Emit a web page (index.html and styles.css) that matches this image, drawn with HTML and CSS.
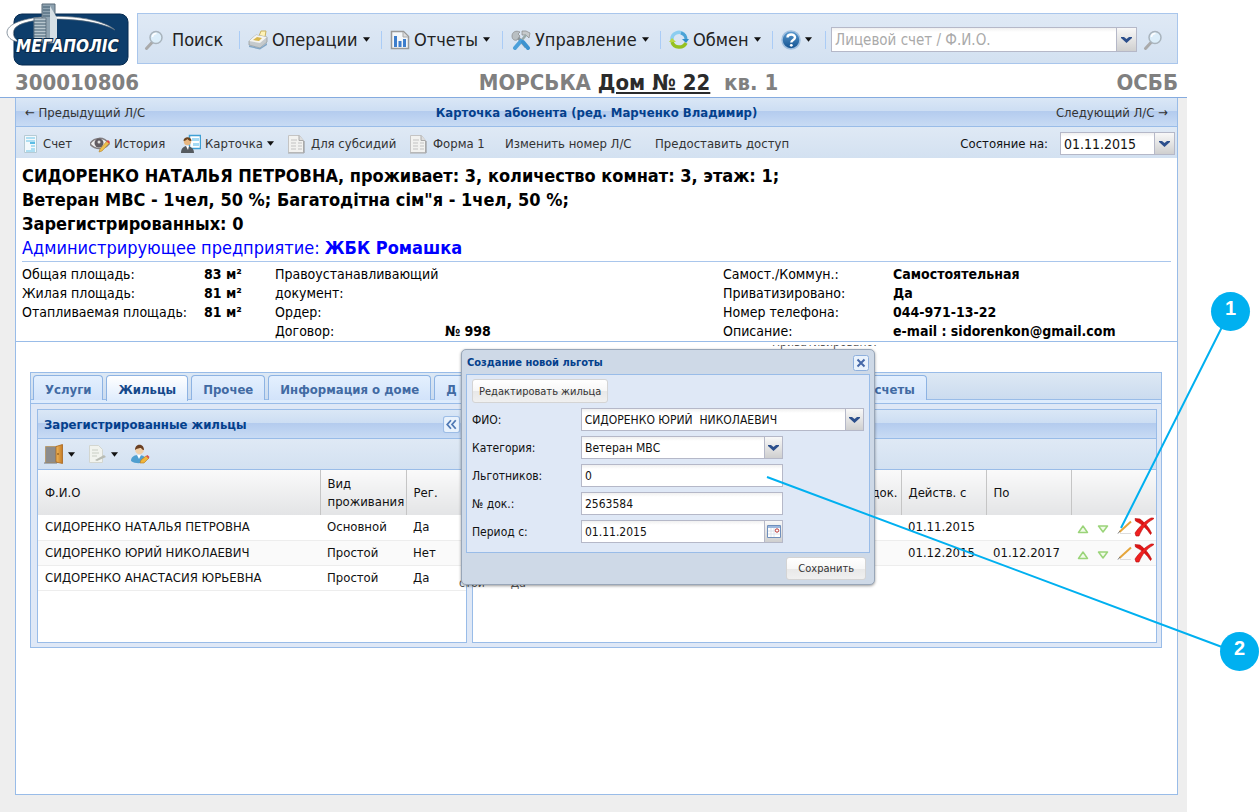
FILE: index.html
```html
<!DOCTYPE html>
<html lang="ru">
<head>
    <meta charset="UTF-8">
    <meta name="viewport" content="width=device-width, initial-scale=1.0">
    <title>Карточка абонента</title>
    <link rel="stylesheet" href="styles.css">
</head>
<body>
    <!-- icon set -->
    <svg class="defs" width="0" height="0">
        <defs>
            <linearGradient id="gDoor" x1="0" x2="1"><stop offset="0" stop-color="#f0b85c"/><stop offset="1" stop-color="#c47a24"/></linearGradient>
            <linearGradient id="gHelp" x1="0" y1="0" x2="0" y2="1"><stop offset="0" stop-color="#5b9bd0"/><stop offset="1" stop-color="#11508f"/></linearGradient>
        </defs>
        <symbol id="i-search" viewBox="0 0 20 20">
            <path d="M8 12.5 2.5 18.5" stroke="#aaa" stroke-width="3" stroke-linecap="round"/>
            <circle cx="12" cy="7.5" r="6" fill="#dceefa" stroke="#a9b4bd" stroke-width="1.5"/>
            <path d="M8.5 7a4 4 0 0 1 4-3.500" stroke="#fff" stroke-width="1.500" fill="none"/>
        </symbol>
        <symbol id="i-printer" viewBox="0 0 20 20">
            <path d="M11 6 13 1h5l-1 6z" fill="#fff3b8" stroke="#c9b160"/>
            <path d="M1 11 8 5l11 2v5l-7 6-11-3z" fill="#c5cacd" stroke="#9a9f9f" stroke-width=".8"/>
            <path d="M1 11 8 5l11 2-7 6z" fill="#f4f4f1"/>
            <path d="M5 10 9 7l5 1-3 3z" fill="#d8b64c"/>
            <path d="M1 15.500 12 18l7-5v2l-7 4.500-11-2.500z" fill="#84a7c6"/>
        </symbol>
        <symbol id="i-chart" viewBox="0 0 20 20">
            <path d="M1.500 1.500h12l5 5v12h-17z" fill="#f4f7fa" stroke="#999" stroke-width="1.500"/>
            <path d="M13 2v5h5" fill="#ddd" stroke="#aaa"/>
            <path d="M4 6h3v11H4zM8.500 11h3v6h-3zM13 9h3v8h-3z" fill="#3d7dcc"/>
        </symbol>
        <symbol id="i-tools" viewBox="0 0 20 20">
            <path d="M4 4 15 17" stroke="#8b969c" stroke-width="3"/>
            <path d="M1 6c0-4 4-6 8-4L7 4l2 2-3 4C3 11 1 9 1 6z" fill="#b9bfc2" stroke="#888" stroke-width=".7"/>
            <path d="M11 1h4l4 2-1 5-3-3h-4z" fill="#c6cacc" stroke="#888" stroke-width=".7"/>
            <path d="M15 5 10 11" stroke="#9aa" stroke-width="2.500"/>
            <path d="M10 11 4 18" stroke="#4ba0da" stroke-width="4" stroke-linecap="round"/>
            <path d="M12 12 17 18" stroke="#3c92d0" stroke-width="4" stroke-linecap="round"/>
        </symbol>
        <symbol id="i-sync" viewBox="0 0 20 20">
            <path d="M3 10A7 7 0 0 1 15 4.500" fill="none" stroke="#8ccdf0" stroke-width="3.500"/>
            <path d="M12 3a7 7 0 0 1 5 7" fill="none" stroke="#4ba3d6" stroke-width="3"/>
            <path d="M13 9h7l-3 4z" fill="#2f8fca"/>
            <path d="M17 13a7.500 7 0 0 1-14-1" fill="none" stroke="#95c11f" stroke-width="3.500"/>
            <path d="M0 12 3 8l4 4z" fill="#b9d83f"/>
        </symbol>
        <symbol id="i-help" viewBox="0 0 20 20">
            <circle cx="10" cy="10" r="9" fill="url(#gHelp)" stroke="#9fbede" stroke-width="1.500"/>
            <path d="M6.500 7.500c0-4 7.500-4 7.500 0 0 2.500-3.700 2.500-3.700 5" fill="none" stroke="#fff" stroke-width="2.400"/>
            <circle cx="10.300" cy="15.300" r="1.400" fill="#fff"/>
        </symbol>
        <symbol id="i-bill" viewBox="0 0 16 20">
            <path d="M1.500 1.500h12v17h-12z" fill="#f3f9fc" stroke="#b6cbd5"/>
            <path d="M3 4h9M3 7h9M8 12h4M8 15h4M3 17h9" stroke="#96d5ee" stroke-width="1.500"/>
            <path d="M7 8h5v2H7z" fill="#5bbce4"/>
        </symbol>
        <symbol id="i-eye" viewBox="0 0 20 20">
            <path d="M0 10C4 3 14 2 19 10c-5 6-14 6-19 0z" fill="#eee" stroke="#817d80" stroke-width="1.500"/>
            <circle cx="9" cy="9" r="4.500" fill="#615b60"/><circle cx="9" cy="8" r="1.500" fill="#ddd"/>
            <path d="m9 18 1-3 7-8 2.500 2-7.500 8z" fill="#efc04d" stroke="#b3822a" stroke-width=".6"/>
            <path d="m16.500 7.500 1.500-1.500 2 2-1 1.500z" fill="#d44"/>
        </symbol>
        <symbol id="i-card" viewBox="0 0 20 20">
            <path d="M8.500 1.500h11v13h-11z" fill="#fff" stroke="#3fa0d5" stroke-width="1.500"/>
            <path d="M11 4h7v3h-7zM12 9h6v3h-6z" fill="#a5daf4"/>
            <path d="M0 19c0-5 3-7 6-7s7 2 7 7z" fill="#555a5f"/>
            <path d="M5 12h3l-1 4z" fill="#fff"/>
            <circle cx="6.500" cy="7.500" r="3.700" fill="#e7b680"/>
            <path d="M2.500 7c0-5 8-5 8 0-3 0-4-2-4-2s-2 2-4 2z" fill="#6a4420"/>
        </symbol>
        <symbol id="i-doc" viewBox="0 0 20 20">
            <path d="M1.500 1.500h11l4 5v12h-15z" fill="#f2f2f0" stroke="#c4c4c4"/>
            <path d="M12 1.500v5h4.500" fill="#ddd" stroke="#aaa"/>
            <path d="M4 6h6M4 9h5M11 9h4M4 12h5M11 12h4M4 15h5M11 15h4" stroke="#c2c2c2"/>
            <path d="M17 7v12" stroke="#8e8e8e"/><path d="M1 19h16" stroke="#aaa"/>
        </symbol>
        <symbol id="i-door" viewBox="0 0 20 20">
            <path d="M1.500 2.500h12v16h-12z" fill="#8c8c8c" stroke="#b79c71"/>
            <path d="M12 2.500 18.500.5v19L12 18z" fill="url(#gDoor)" stroke="#a8651c" stroke-width=".8"/>
            <circle cx="14" cy="10" r=".8" fill="#6e3d08"/><path d="M0 19h13" stroke="#777"/>
        </symbol>
        <symbol id="i-note" viewBox="0 0 20 20">
            <path d="M2.500 1.500h9l4 4v13h-13z" fill="#f1f3ee" stroke="#d3d6d0"/>
            <path d="M5 6h6M5 9h7M5 12h5" stroke="#c9cec4"/>
            <path d="m8 16 9-5 2 2-9 4z" fill="#b9bcb4"/>
        </symbol>
        <symbol id="i-person" viewBox="0 0 20 20">
            <path d="M1 17c0-5 4-6 8-6s7 2 7 6c-4 3-11 3-15 0z" fill="#4f9fd0"/>
            <path d="m7 11 2 4 2-4z" fill="#fff"/>
            <circle cx="9.500" cy="6" r="4.300" fill="#f0cfa8"/>
            <path d="M5 6c0-7 9-7 9 0-2 0-3-2-3-2s-3 0-6 2z" fill="#6b4023"/>
            <path d="m10 19 1-3 5-4 3 2-5 5z" fill="#f2b63a" stroke="#b7791d" stroke-width=".6"/>
            <path d="m16 12 1.500-1 2 2-1 1.500z" fill="#d9534f"/>
        </symbol>
        <symbol id="i-up" viewBox="0 0 12 10"><path d="M6 2 10.500 8.500h-9z" fill="#f1fbe9" stroke="#9ad479" stroke-width="1.500" stroke-linejoin="round"/></symbol>
        <symbol id="i-down" viewBox="0 0 12 10"><path d="M6 8 1.500 2h9z" fill="#f1fbe9" stroke="#9ad479" stroke-width="1.500" stroke-linejoin="round"/></symbol>
        <symbol id="i-pencil" viewBox="0 0 16 16">
            <path d="M3 14.500h11" stroke="#ddd"/>
            <path d="M2.500 13 14 2.500" stroke="#e5a53a" stroke-width="2"/><path d="m1 14.500 2-2.500" stroke="#777"/>
        </symbol>
        <symbol id="i-delete" viewBox="0 0 20 20">
            <path d="M1 1.500 6 2c4 3 9 8 11.500 14l-1 1.500C13 12 8 7 1.500 4z" fill="#e01313" stroke="#b50c0c" stroke-width=".6"/>
            <path d="M19.500 1 17 1C11 4 5 10 1 16l1 3h3C8 12 12 6 19.500 2z" fill="#f02020" stroke="#b50c0c" stroke-width=".6"/>
        </symbol>
        <symbol id="i-chevron" viewBox="0 0 11 8"><path d="M0 1h3l2.500 2L8 1h3v1L5.500 7 0 2z" fill="#2c4f8c"/></symbol>
        <symbol id="i-caret" viewBox="0 0 8 5"><path d="M0 0h8L4 5z" fill="#111"/></symbol>
        <symbol id="i-calendar" viewBox="0 0 14 13">
            <path d="M.5.5h13v12H.5z" fill="#fff" stroke="#6f8fbc"/><path d="M1 1h12v2H1z" fill="#9cb8de"/>
            <path d="M4 3v9M7 3v9M1 6h12M1 9h12" stroke="#dce3ec"/><circle cx="10" cy="5.500" r="1.700" fill="#fff" stroke="#b33"/>
        </symbol>
        <symbol id="i-close" viewBox="0 0 16 16">
            <rect x=".5" y=".5" width="15" height="15" rx="2" fill="#e9f2fc" stroke="#8fb0dd"/>
            <path d="m4.500 4.500 7 7m0-7-7 7" stroke="#4668a8" stroke-width="2"/>
        </symbol>
        <symbol id="i-collapse" viewBox="0 0 16 16">
            <rect x=".5" y=".5" width="15" height="15" rx="2" fill="#e9f2fc" stroke="#9dbde6"/>
            <path d="M7.500 4 4 8l3.500 4M12 4 8.500 8l3.500 4" fill="none" stroke="#4f78b4" stroke-width="1.700"/>
        </symbol>
    </svg>

    <div class="app">
        <header class="header">
            <svg class="logo" viewBox="0 0 126 64" role="img" aria-label="Мегаполіс">
                <rect x="8" y="11" width="114" height="51" rx="8" fill="#0d3d6b" stroke="#072b50"/>
                <path d="M1 29C3 9 88 8 109 27 85 13 14 12 8 27c-2 5 1 9 5 12C5 38 1 34 1 29z" fill="#fff" stroke="#5b6d7d" stroke-width=".7"/>
                <path d="M36 1h13v39H36z" fill="#8fa3b1" stroke="#596b78"/>
                <path d="M44 3l7 12v25h-7z" fill="#d7e0e5"/>
                <path d="M28 15h12v24H28z" fill="#b9c7cf" stroke="#6a7b87"/>
                <path d="M28 18h12M28 21h12M28 24h12M28 27h12M28 30h12M28 33h12M37 4h7M37 7h7M37 10h7M37 13h7" stroke="#415d70" stroke-width="1"/>
                <text x="10" y="49">МЕГАПОЛІС</text>
            </svg>
            <nav class="main-menu">
                <button><svg><use href="#i-search"/></svg>Поиск</button>
                <button><svg><use href="#i-printer"/></svg>Операции<svg class="caret"><use href="#i-caret"/></svg></button>
                <button><svg><use href="#i-chart"/></svg>Отчеты<svg class="caret"><use href="#i-caret"/></svg></button>
                <button><svg><use href="#i-tools"/></svg>Управление<svg class="caret"><use href="#i-caret"/></svg></button>
                <button><svg><use href="#i-sync"/></svg>Обмен<svg class="caret"><use href="#i-caret"/></svg></button>
                <button aria-label="Помощь"><svg><use href="#i-help"/></svg><svg class="caret"><use href="#i-caret"/></svg></button>
                <div class="search">
                    <div class="combo">
                        <input type="text" placeholder="Лицевой счет / Ф.И.О." aria-label="Лицевой счет / Ф.И.О.">
                        <button class="trigger" aria-label="Открыть список"><svg><use href="#i-chevron"/></svg></button>
                    </div>
                    <button class="go" aria-label="Найти"><svg><use href="#i-search"/></svg></button>
                </div>
            </nav>
        </header>

        <div class="account">
            <span>300010806</span>
            <span class="address">МОРСЬКА <a href="#">Дом № 22</a>&nbsp; кв. 1</span>
            <span class="owner">ОСББ</span>
        </div>

        <div class="workspace">
            <main class="card">
                <div class="title-bar">
                    <a href="#">← Предыдущий Л/С</a>
                    <h1>Карточка абонента (ред. Марченко Владимир)</h1>
                    <a href="#">Следующий Л/С →</a>
                </div>
                <div class="toolbar">
                    <button><svg class="narrow"><use href="#i-bill"/></svg>Счет</button>
                    <button><svg><use href="#i-eye"/></svg>История</button>
                    <button><svg><use href="#i-card"/></svg>Карточка<svg class="caret"><use href="#i-caret"/></svg></button>
                    <button><svg><use href="#i-doc"/></svg>Для субсидий</button>
                    <button><svg><use href="#i-doc"/></svg>Форма 1</button>
                    <button>Изменить номер Л/С</button>
                    <button>Предоставить доступ</button>
                    <div class="state">
                        <label for="stateDate">Состояние на:</label>
                        <div class="combo">
                            <select id="stateDate"><option>01.11.2015</option></select>
                            <span class="trigger"><svg><use href="#i-chevron"/></svg></span>
                        </div>
                    </div>
                </div>

                <section class="summary">
                    <div class="person">
                        СИДОРЕНКО НАТАЛЬЯ ПЕТРОВНА, проживает: 3, количество комнат: 3, этаж: 1;<br>
                        Ветеран МВС - 1чел, 50 %; Багатодітна сім"я - 1чел, 50 %;<br>
                        Зарегистрированных: 0
                        <p>Администрирующее предприятие: <b>ЖБК Ромашка</b></p>
                    </div>
                    <div class="details">
                        <div>Общая площадь:<br>Жилая площадь:<br>Отапливаемая площадь:</div>
                        <div class="val">83 м²<br>81 м²<br>81 м²</div>
                        <div>Правоустанавливающий<br>документ:<br>Ордер:<br>Договор:</div>
                        <div class="val last">№ 998</div>
                        <div>Самост./Коммун.:<br>Приватизировано:<br>Номер телефона:<br>Описание:</div>
                        <div class="val">Самостоятельная<br>Да<br>044-971-13-22<br>e-mail : sidorenkon@gmail.com</div>
                    </div>
                </section>

                <section class="tab-panel">
                    <div class="tabs" role="tablist">
                        <button role="tab">Услуги</button>
                        <button role="tab" class="active">Жильцы</button>
                        <button role="tab">Прочее</button>
                        <button role="tab">Информация о доме</button>
                        <button role="tab" class="wide">Д</button>
                        <button role="tab">Расчеты</button>
                    </div>
                    <div class="tab-body">
                        <div class="panel residents">
                            <div class="panel-head">
                                <h2>Зарегистрированные жильцы</h2>
                                <button aria-label="Свернуть"><svg><use href="#i-collapse"/></svg></button>
                            </div>
                            <div class="panel-tools">
                                <button aria-label="Выписка"><svg><use href="#i-door"/></svg><svg class="caret"><use href="#i-caret"/></svg></button>
                                <button aria-label="Справки"><svg><use href="#i-note"/></svg><svg class="caret"><use href="#i-caret"/></svg></button>
                                <button aria-label="Редактировать"><svg><use href="#i-person"/></svg></button>
                            </div>
                            <table>
                                <colgroup><col class="c-name"><col class="c-kind"><col></colgroup>
                                <thead><tr><th>Ф.И.О</th><th>Вид проживания</th><th>Рег.</th></tr></thead>
                                <tbody>
                                    <tr><td>СИДОРЕНКО НАТАЛЬЯ ПЕТРОВНА</td><td>Основной</td><td>Да</td></tr>
                                    <tr><td>СИДОРЕНКО ЮРИЙ НИКОЛАЕВИЧ</td><td>Простой</td><td>Нет</td></tr>
                                    <tr><td>СИДОРЕНКО АНАСТАСИЯ ЮРЬЕВНА</td><td>Простой</td><td>Да</td></tr>
                                </tbody>
                            </table>
                        </div>
                        <div class="panel benefits">
                            <div class="panel-head"></div>
                            <div class="panel-tools"></div>
                            <table>
                                <colgroup><col><col class="c-date"><col class="c-date"><col class="c-date"></colgroup>
                                <thead><tr><th class="right">док.</th><th>Действ. с</th><th>По</th><th></th></tr></thead>
                                <tbody>
                                    <tr>
                                        <td></td><td>01.11.2015</td><td></td>
                                        <td><div class="actions">
                                            <button aria-label="Выше"><svg class="arrow"><use href="#i-up"/></svg></button>
                                            <button aria-label="Ниже"><svg class="arrow"><use href="#i-down"/></svg></button>
                                            <button aria-label="Изменить"><svg class="pencil"><use href="#i-pencil"/></svg></button>
                                            <button aria-label="Удалить"><svg><use href="#i-delete"/></svg></button>
                                        </div></td>
                                    </tr>
                                    <tr>
                                        <td></td><td>01.12.2015</td><td>01.12.2017</td>
                                        <td><div class="actions">
                                            <button aria-label="Выше"><svg class="arrow"><use href="#i-up"/></svg></button>
                                            <button aria-label="Ниже"><svg class="arrow"><use href="#i-down"/></svg></button>
                                            <button aria-label="Изменить"><svg class="pencil"><use href="#i-pencil"/></svg></button>
                                            <button aria-label="Удалить"><svg><use href="#i-delete"/></svg></button>
                                        </div></td>
                                    </tr>
                                </tbody>
                            </table>
                        </div>
                    </div>
                </section>
            </main>
        </div>
    </div>

    <div class="peek top"><span>Приватизировано:</span></div>
    <div class="peek bottom"><span>стой</span><span>Да</span></div>

    <form class="dialog" role="dialog" aria-labelledby="dlgTitle">
        <div class="dialog-title">
            <h2 id="dlgTitle">Создание новой льготы</h2>
            <button type="button" aria-label="Закрыть"><svg><use href="#i-close"/></svg></button>
        </div>
        <div class="dialog-body">
            <button type="button" class="btn">Редактировать жильца</button>
            <div class="field full">
                <label for="fio">ФИО:</label>
                <div class="combo">
                    <select id="fio"><option>СИДОРЕНКО ЮРИЙ&nbsp; НИКОЛАЕВИЧ</option></select>
                    <span class="trigger"><svg><use href="#i-chevron"/></svg></span>
                </div>
            </div>
            <div class="field">
                <label for="category">Категория:</label>
                <div class="combo">
                    <select id="category"><option>Ветеран МВС</option></select>
                    <span class="trigger"><svg><use href="#i-chevron"/></svg></span>
                </div>
            </div>
            <div class="field">
                <label for="count">Льготников:</label>
                <div class="combo"><input type="text" id="count" value="0"></div>
            </div>
            <div class="field">
                <label for="docNo">№ док.:</label>
                <div class="combo"><input type="text" id="docNo" value="2563584"></div>
            </div>
            <div class="field">
                <label for="period">Период с:</label>
                <div class="combo">
                    <input type="text" id="period" value="01.11.2015">
                    <button type="button" class="trigger cal" aria-label="Календарь"><svg><use href="#i-calendar"/></svg></button>
                </div>
            </div>
        </div>
        <div class="dialog-footer"><button type="button" class="btn">Сохранить</button></div>
    </form>

    <!-- callouts -->
    <svg class="callout-lines" width="1259" height="700">
        <path d="M1121 528 1222 327M767 477l455 170"/>
    </svg>
    <div class="callout one">1</div>
    <div class="callout two">2</div>
</body>
</html>
```
FILE: styles.css
```css
* {
    box-sizing: border-box;
}
body {
    position: relative;
    margin: 0;
    background: #fff;
    color: #111;
    font-family: "DejaVu Sans Condensed", "DejaVu Sans", sans-serif;
    font-stretch: condensed;
    font-size: 13px;
}
h1, h2, p {
    margin: 0;
    font-size: inherit;
}
button, input, select {
    font: inherit;
    color: inherit;
    margin: 0;
}
button {
    display: flex;
    align-items: center;
    padding: 0;
    border: 0;
    background: none;
    white-space: nowrap;
    cursor: pointer;
}
svg {
    width: 20px;
    height: 20px;
    flex: none;
}
svg.caret {
    width: 7px;
    height: 5px;
    margin-left: 4px;
}
.defs {
    position: absolute;
    width: 0;
    height: 0;
}
.app {
    display: flex;
    flex-direction: column;
    min-height: 100vh;
    margin-right: 72px;
}

/* header */
.header {
    display: flex;
    padding: 3px 9px 0 6px;
}
svg.logo {
    width: 126px;
    height: 64px;
}
.logo text {
    font: italic bold 17px "DejaVu Sans Condensed", sans-serif;
    font-stretch: condensed;
    fill: #fff;
    stroke: #0a2a4a;
    stroke-width: 2px;
    paint-order: stroke;
}
.main-menu {
    flex: 1;
    display: grid;
    grid-template-columns: 102px 142px 121px 158px 112px 53px 1fr;
    align-items: center;
    height: 51px;
    margin: 10px 0 0 5px;
    padding-top: 2px;
    border: 1px solid #a9c6ec;
    background: linear-gradient(#dfe9f5, #d3e1f1);
    font-size: 18px;
    color: #222;
}
.main-menu > button {
    height: 18px;
    padding-left: 8px;
    border-right: 1px solid #aaccf6;
}
.main-menu > button > svg:first-child {
    margin-right: 4px;
}
.main-menu > button:first-child {
    padding-left: 6px;
}
.main-menu > button:first-child > svg {
    margin-right: 8px;
}
.main-menu .caret {
    margin-left: 5px;
}
.main-menu > button[aria-label] .caret {
    margin-left: 0;
}
.search {
    display: flex;
    align-items: center;
    gap: 6px;
    padding: 0 14px 0 5px;
    font-size: 15px;
}
.search .combo {
    flex: 1;
    height: 25px;
}
.search .trigger {
    width: 20px;
}

.combo {
    display: flex;
    height: 23px;
    border: 1px solid #b5b8c8;
    background: linear-gradient(#f0f0f0, #fff 4px);
}
.combo input, .combo select {
    flex: 1;
    min-width: 0;
    padding: 0 3px;
    border: 0;
    outline: 0;
    background: none;
    appearance: none;
}
.combo input::placeholder {
    color: #aaa;
}
.trigger {
    display: flex;
    align-items: center;
    justify-content: center;
    width: 18px;
    border-left: 1px solid #b5b8c8;
    background: linear-gradient(#f8f8f8, #e4e4e4 50%, #cfcfcf);
}
.trigger svg {
    width: 11px;
    height: 8px;
}
.trigger.cal svg {
    width: 14px;
    height: 13px;
}

/* account line */
.account {
    display: grid;
    grid-template-columns: 1fr auto 1fr;
    height: 30px;
    padding: 0 9px 0 15px;
    color: #808080;
    font-size: 22px;
    font-weight: bold;
    line-height: 32px;
}
.account a {
    color: #2b2b2b;
}
.address {
    padding-left: 64px;
}
.owner {
    text-align: right;
}

/* card */
.workspace {
    flex: 1;
    display: flex;
    padding: 0 9px 17px 15px;
    border-top: 1px solid #85abdf;
    background: #eee;
}
.card {
    flex: 1;
    min-width: 0;
    border: 1px solid #99bce8;
    border-top: 0;
    background: #fff;
}
.title-bar {
    display: grid;
    grid-template-columns: 1fr auto 1fr;
    align-items: center;
    height: 29px;
    padding: 0 9px;
    border-bottom: 1px solid #99bce8;
    background: linear-gradient(#dae7f6, #cddef3 45%, #b3cbee 46%, #c8dbf4);
}
.title-bar a {
    color: #333;
    text-decoration: none;
}
.title-bar a:last-child {
    text-align: right;
}
h1, h2 {
    color: #04408c;
    font-weight: bold;
}
.toolbar {
    display: grid;
    grid-template-columns: 67px 91px 106px 122px 96px 150px auto 1fr;
    align-items: center;
    height: 31px;
    padding: 2px 0 0 7px;
    background: linear-gradient(#dfe9f5, #d3e1f1);
    color: #333;
}
.toolbar button > svg:first-child {
    margin-right: 4px;
}
.toolbar svg.narrow {
    width: 16px;
}
.toolbar .state {
    display: flex;
    align-items: center;
    justify-content: flex-end;
    gap: 12px;
    padding-right: 2px;
    color: #111;
}
.state .combo {
    width: 115px;
    font-size: 14px;
}
.state .trigger {
    width: 20px;
}

.summary {
    padding: 6px 6px 0;
    border-bottom: 1px solid #99bce8;
    color: #000;
}
.person {
    padding-bottom: 1px;
    border-bottom: 1px solid #a9c6ec;
    font-size: 18px;
    font-weight: bold;
    line-height: 24px;
}
.person p {
    color: #00f;
    font-weight: normal;
}
.details {
    display: grid;
    grid-template-columns: 182px 71px 170px 1fr 170px 278px;
    padding: 3px 0 0;
    font-size: 14px;
    line-height: 19px;
}
.val {
    font-weight: bold;
}
.last {
    align-self: end;
}

/* tabs */
.tab-panel {
    margin: 30px 15px 0 14px;
    border: 1px solid #99bce8;
    background: #dfe8f6;
}
.tabs {
    display: flex;
    gap: 3px;
    height: 31px;
    padding: 2px 2px 0;
    border-bottom: 1px solid #99bce8;
    background: linear-gradient(#dde8f4, #cbdbef 26px, #99bce8 26px, #99bce8 27px, #deecfd 27px);
    font-size: 13px;
    font-weight: bold;
}
.tabs button {
    justify-content: center;
    height: 25px;
    padding: 2px 11px 0;
    border: 1px solid #8db3e3;
    border-bottom: 0;
    border-radius: 4px 4px 0 0;
    background: linear-gradient(#e4f0fe, #d2e3fa);
    color: #416aa3;
}
.tabs .active {
    height: 26px;
    background: linear-gradient(#fff, #deecfd);
    color: #15498b;
}
.tabs .wide {
    width: 409px;
    justify-content: flex-start;
}
.tab-body {
    display: flex;
    gap: 5px;
    padding: 5px 4px 4px 6px;
}
.panel {
    height: 234px;
    border: 1px solid #99bce8;
    background: #fff;
}
.residents {
    width: 430px;
}
.benefits {
    flex: 1;
}
.panel-head {
    display: flex;
    align-items: center;
    justify-content: space-between;
    height: 29px;
    padding: 0 6px;
    border-bottom: 1px solid #99bce8;
    background: linear-gradient(#dae7f6, #cddef3 45%, #b3cbee 46%, #c8dbf4);
}
.panel-head svg {
    width: 17px;
    height: 17px;
}
.panel-tools {
    display: flex;
    align-items: center;
    gap: 12px;
    height: 31px;
    padding-left: 6px;
    border-bottom: 1px solid #99bce8;
    background: linear-gradient(#dfe9f5, #d3e1f1);
}
table {
    width: 100%;
    border-collapse: collapse;
    table-layout: fixed;
    line-height: 18px;
}
th {
    height: 45px;
    padding: 0 0 0 7px;
    border-right: 1px solid #c5c5c5;
    background: linear-gradient(#fafafa, #e3e4e6);
    font-weight: normal;
    text-align: left;
}
th:last-child {
    border-right: 0;
}
.right {
    padding-right: 3px;
    text-align: right;
}
td {
    height: 25px;
    padding: 0 0 0 7px;
    border-bottom: 1px solid #ededed;
}
tbody tr:nth-child(even) {
    background: #fafafa;
}
.c-name {
    width: 282px;
}
.c-kind {
    width: 86px;
}
.c-date {
    width: 85px;
}
.actions {
    display: flex;
    align-items: center;
    justify-content: flex-end;
    height: 24px;
    padding-right: 2px;
}
svg.arrow {
    width: 12px;
    height: 10px;
    margin: 4px 8px 0 0;
}
svg.pencil {
    width: 16px;
    height: 16px;
    margin-right: 1px;
}

/* dialog */
.dialog {
    position: absolute;
    left: 461px;
    top: 349px;
    width: 414px;
    padding: 0 4px;
    border: 1px solid #98a6b8;
    border-radius: 5px;
    background: #ced9e7;
    box-shadow: 0 1px 3px rgba(0, 0, 0, .4);
    font-size: 12px;
}
.dialog-title {
    display: flex;
    align-items: center;
    justify-content: space-between;
    height: 24px;
    padding: 1px 1px 0;
    font-size: 11px;
}
.dialog-title svg {
    width: 16px;
    height: 16px;
}
.dialog-body {
    display: flex;
    flex-direction: column;
    gap: 5px;
    height: 179px;
    padding: 4px 5px;
    border: 1px solid #99bce8;
    background: #dfe8f6;
}
.btn {
    align-self: flex-start;
    height: 23px;
    padding: 0 6px;
    border: 1px solid #d4d4d4;
    border-radius: 3px;
    background: linear-gradient(#fff, #f7f7f7 50%, #e8e8e8 51%, #f0f0f0);
    color: #333;
    font-size: 11px;
}
.dialog-body .btn {
    height: 24px;
}
.field {
    display: flex;
    align-items: center;
}
.field label {
    width: 109px;
}
.field .combo {
    width: 202px;
}
.full .combo {
    width: 284px;
}
.dialog-footer {
    display: flex;
    justify-content: flex-end;
    height: 31px;
    padding: 4px;
}
.dialog-footer .btn {
    padding: 0 11px;
}

/* text cut off by the dialog edges */
.peek {
    position: absolute;
    display: flex;
    overflow: hidden;
    color: #555;
    font-size: 12px;
    line-height: 14px;
}
.peek.top {
    left: 772px;
    top: 345px;
    height: 4px;
    align-items: flex-end;
}
.peek.bottom {
    left: 459px;
    top: 576px;
    gap: 26px;
}

/* callouts */
.callout-lines {
    position: absolute;
    left: 0;
    top: 0;
    width: 1259px;
    height: 700px;
    fill: none;
    stroke: #00b0f0;
    stroke-width: 2px;
    pointer-events: none;
}
.callout {
    position: absolute;
    width: 39px;
    height: 39px;
    border-radius: 50%;
    background: #00b0f0;
    color: #fff;
    font: bold 20px "Liberation Sans", sans-serif;
    line-height: 32px;
    text-align: center;
}
.one {
    left: 1211px;
    top: 292px;
}
.two {
    left: 1220px;
    top: 632px;
}
```
